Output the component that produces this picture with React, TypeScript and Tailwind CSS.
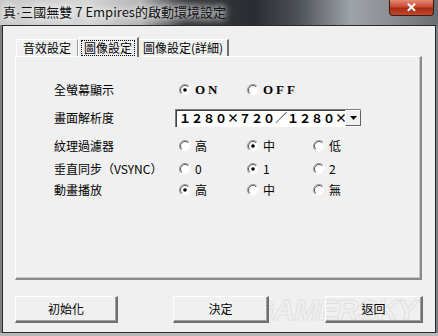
import React from 'react'

const cjk = '"Noto Sans CJK TC", "Noto Sans CJK SC", sans-serif'

const Radio = ({ checked }: { checked?: boolean }) => (
  <svg width="12" height="12" viewBox="0 0 12 12" className="shrink-0">
    <circle cx="6" cy="6" r="5" fill="#ffffff" />
    <path d="M2.1 9.9 A5.5 5.5 0 0 1 9.9 2.1" stroke="#9a9a9a" strokeWidth="1" fill="none" />
    <path d="M2.8 9.2 A4.5 4.5 0 0 1 9.2 2.8" stroke="#5a5a5a" strokeWidth="1" fill="none" />
    <path d="M9.9 2.1 A5.5 5.5 0 0 1 2.1 9.9" stroke="#f4f4f4" strokeWidth="1" fill="none" />
    {checked && <circle cx="6" cy="6" r="1.8" fill="#000" />}
  </svg>
)

const Option = ({ label, checked, serif }: { label: string; checked?: boolean; serif?: boolean }) => (
  <div className="flex items-center gap-[4px]">
    <Radio checked={checked} />
    <span
      className={serif ? 'font-bold tracking-[3px] text-[13px]' : 'text-[12px]'}
      style={{ fontFamily: serif ? '"Liberation Serif", serif' : cjk }}
    >
      {label}
    </span>
  </div>
)

const Row = ({ label, opts, mt }: { label: string; opts: [string, boolean, boolean?][]; mt: string }) => (
  <div className={`flex items-center h-[20px] ${mt}`}>
    <span className="w-[125px] text-[12px]">{label}</span>
    {opts.map(([t, c, s], i) => (
      <div key={t} className={i < 2 ? (i === 0 ? 'w-[68px]' : 'w-[66px]') : ''}>
        <Option label={t} checked={c} serif={s} />
      </div>
    ))}
  </div>
)

const Button = ({ children, className }: { children: React.ReactNode; className: string }) => (
  <div
    className={`h-[27px] flex items-center justify-center text-[12px] bg-[#f0f0f0] border-t border-l border-t-white border-l-white border-b-2 border-r-2 border-b-[#6f6f6f] border-r-[#6f6f6f] shadow-[inset_-1px_-1px_0_#a0a0a0] ${className}`}
  >
    {children}
  </div>
)

export default function App() {
  return (
    <div
      className="w-[438px] h-[336px] overflow-hidden flex flex-col text-black bg-[#7d8084]"
      style={{ fontFamily: cjk }}
    >
      <div className="h-[25px] shrink-0 flex items-start bg-[linear-gradient(90deg,#c9c9c9_0%,#d6d6d6_20%,#b5b5b5_32%,#3a3c40_42%,#2a2c31_58%,#4c5057_68%,#9ea3a8_80%,#8e9296_88%,#6a6d70_100%)]">
        <span className="pl-[3px] pt-[2px] text-[13px] leading-[20px] text-[#111] [text-shadow:0_0_6px_#ffffff,0_0_10px_#ffffff]">
          真<span style={{ fontFamily: '"Liberation Sans", sans-serif' }}>·</span>三國無雙 7 Empires的啟動環境設定
        </span>
        <div className="ml-auto mr-[4px] w-[45px] h-[16px] rounded-b-[4px] border border-t-0 border-[#3b1a14] bg-[linear-gradient(180deg,#e48a74_0%,#c94a32_45%,#a82a16_55%,#c2482c_100%)] flex items-center justify-center">
          <span className="text-white text-[13px] font-bold leading-none" style={{ fontFamily: '"Liberation Sans", sans-serif' }}>
            ✕
          </span>
        </div>
      </div>

      <div className="mx-[2px] h-[308px] border border-[#2b2b2b] bg-[#f0f0f0] flex flex-col px-[12px]">
        <div className="flex items-end h-[30px] pl-[1px] text-[12px]">
          <div className="h-[17px] px-[6px] flex items-center border-t border-l border-white border-r border-r-[#a0a0a0]">
            音效設定
          </div>
          <div className="h-[20px] w-[61px] flex items-center justify-center border-t border-l border-white border-r-2 border-r-[#707070] bg-[#f0f0f0] relative top-[1px] z-10">
            <span className="border border-dotted border-black px-[2px] leading-[14px]">圖像設定</span>
          </div>
          <div className="h-[17px] px-[4px] flex items-center border-t border-white border-r-2 border-r-[#707070]">
            圖像設定(詳細)
          </div>
        </div>

        <div className="h-[224px] w-[407px] border-t border-l border-white border-r-2 border-b-2 border-r-[#8a8a8a] border-b-[#8a8a8a] shadow-[inset_-1px_-1px_0_#c8c8c8] pl-[38px] pt-[23px] flex flex-col">
          <Row label="全螢幕顯示" mt="" opts={[['ON', true, true], ['OFF', false, true]]} />
          <div className="flex items-center h-[18px] mt-[9px]">
            <span className="w-[121px] text-[12px]">畫面解析度</span>
            <div className="w-[186px] h-[18px] flex border-t border-l border-[#7a7a7a] bg-white shadow-[inset_1px_1px_0_#404040]">
              <div className="flex-1 overflow-hidden whitespace-nowrap pl-[3px] text-[12px] font-semibold leading-[16px]">
                １２８０×７２０／１２８０×
              </div>
              <div className="w-[16px] h-[16px] bg-[#f0f0f0] border-t border-l border-white border-r border-b border-r-[#606060] border-b-[#606060] flex items-center justify-center">
                <svg width="7" height="4" viewBox="0 0 7 4">
                  <path d="M0 0 H7 L3.5 4 Z" fill="#000" />
                </svg>
              </div>
            </div>
          </div>
          <Row label="紋理過濾器" mt="mt-[9px]" opts={[['高', false], ['中', true], ['低', false]]} />
          <Row label="垂直同步（VSYNC）" mt="mt-[3px]" opts={[['0', false], ['1', true], ['2', false]]} />
          <Row label="動畫播放" mt="mt-[1px]" opts={[['高', true], ['中', false], ['無', false]]} />
        </div>

        <div className="relative flex items-center mt-[16px]">
          <span
            className="absolute left-[236px] top-[0px] text-[30px] italic font-bold text-transparent [-webkit-text-stroke:1px_#e0e0e0] tracking-[-1px] leading-[27px] pointer-events-none"
            style={{ fontFamily: '"Liberation Sans", sans-serif' }}
          >
            GAMERSKY
          </span>
          <Button className="w-[103px] relative">初始化</Button>
          <Button className="w-[96px] ml-[55px] relative">決定</Button>
          <Button className="w-[98px] ml-auto relative bg-transparent">返回</Button>
        </div>
      </div>
      <div className="flex-1 bg-[#b8b8b8]" />
    </div>
  )
}
